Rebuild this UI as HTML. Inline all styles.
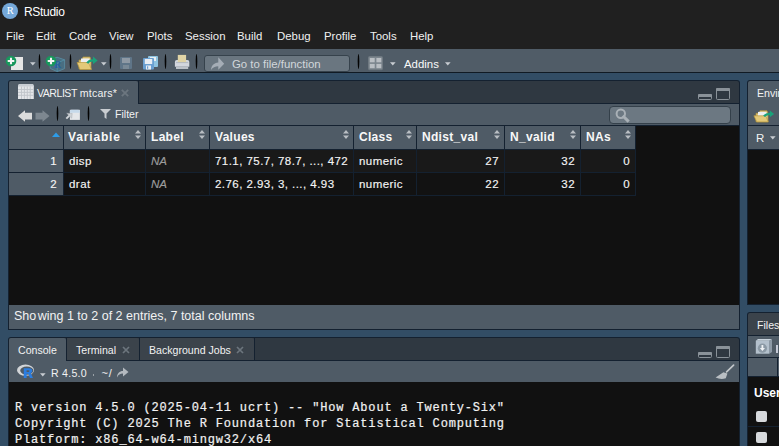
<!DOCTYPE html>
<html><head><meta charset="utf-8">
<style>
*{margin:0;padding:0;box-sizing:border-box}
html,body{width:779px;height:446px;overflow:hidden;background:#324d65;font-family:"Liberation Sans",sans-serif;color:#fff}
div,svg{position:absolute}
svg{overflow:visible}
.t{white-space:nowrap;line-height:14px}
.menu{top:29px;font-size:11.4px;color:#f0f0f0}
.sep{width:1.6px;background:#050505;border-radius:50%}
.bd{background:#142130}
.gray{background:#4f5b66}
.strip{background:#2f3841}
.itab{background:#3b434b}
.ui{font-size:10.6px;color:#f2f2f2}
.hdr{font-size:12px;letter-spacing:0.3px;font-weight:bold;color:#f8f8f8;top:130px}
.cell{font-size:11.5px;letter-spacing:0.45px;color:#f4f4f4;-webkit-text-stroke:0.15px #f4f4f4}
.mono{font-family:"Liberation Mono",monospace;font-size:12px;letter-spacing:0.83px;color:#f2f2f2;line-height:16px;white-space:pre;-webkit-text-stroke:0.2px #f2f2f2}
.arr{width:0;height:0;border-left:2.5px solid transparent;border-right:2.5px solid transparent;border-top:3.5px solid #c8ccd0}
</style></head><body>
<!-- title + menubar -->
<div style="left:0;top:0;width:779px;height:49px;background:#202020"></div>
<div style="left:2px;top:3px;width:16px;height:16px;border-radius:50%;background:#75a8d9"></div>
<div class="t" style="left:2.3px;top:4px;width:16px;text-align:center;font-family:'Liberation Serif',serif;font-size:10.5px;color:#fff">R</div>
<div class="t" style="left:24px;top:4.5px;font-size:12px;letter-spacing:-0.3px;color:#fff">RStudio</div>
<div class="t menu" style="left:6px">File</div>
<div class="t menu" style="left:36px">Edit</div>
<div class="t menu" style="left:69px">Code</div>
<div class="t menu" style="left:109px">View</div>
<div class="t menu" style="left:147px">Plots</div>
<div class="t menu" style="left:185px">Session</div>
<div class="t menu" style="left:237px">Build</div>
<div class="t menu" style="left:277px">Debug</div>
<div class="t menu" style="left:324px">Profile</div>
<div class="t menu" style="left:370px">Tools</div>
<div class="t menu" style="left:410px">Help</div>

<!-- main toolbar -->
<div style="left:0;top:49px;width:779px;height:23px;background:#505c67"></div>
<div style="left:0;top:72px;width:779px;height:1px;background:#101a24"></div>
<!-- new file icon -->
<div style="left:11px;top:57px;width:12px;height:13px;background:#e6e6e6"></div>

<svg style="left:5px;top:55px" width="12" height="12" viewBox="0 0 12 12"><circle cx="6" cy="6" r="5.3" fill="#18975c"/><path d="M6 2.7v6.6M2.7 6h6.6" stroke="#f4f4f4" stroke-width="2.1"/></svg>
<svg style="left:29.8px;top:62px" width="6" height="4" viewBox="0 0 6 4"><path d="M0 0.2h5.6L2.8 3.4z" fill="#c8cdd2"/></svg>
<svg style="left:38px;top:54px" width="3" height="15" viewBox="0 0 3 15"><ellipse cx="1.5" cy="7.5" rx="0.8" ry="7.5" fill="#030303"/></svg>
<!-- new project icon -->
<svg style="left:49px;top:56px" width="17" height="17" viewBox="0 0 17 17"><path d="M1.2 4.2L8 1.2l7.6 2.6v8.8L8.2 15.6 1.2 12.4z" fill="#457d99" opacity="0.55" stroke="#5fb2d0" stroke-width="0.9"/><path d="M1.2 4.2l7 2.8 7.4-3.2M8.2 7v8.6" stroke="#5fb2d0" stroke-width="0.7" fill="none" opacity="0.6"/><text x="5.2" y="11.8" font-family="Liberation Serif" font-weight="bold" font-size="9.5" fill="#2660a6">R</text></svg>
<svg style="left:45px;top:55px" width="12" height="12" viewBox="0 0 12 12"><circle cx="6" cy="6" r="5.3" fill="#18975c"/><path d="M6 2.7v6.6M2.7 6h6.6" stroke="#f4f4f4" stroke-width="2.1"/></svg>
<svg style="left:69px;top:54px" width="3" height="15" viewBox="0 0 3 15"><ellipse cx="1.5" cy="7.5" rx="0.8" ry="7.5" fill="#030303"/></svg>
<!-- open icon -->
<svg style="left:76px;top:56px" width="22" height="15" viewBox="0 0 22 15"><path d="M3 4h3l1-3h7l1 3v9H3z" fill="#dcc47c" stroke="#b3953e" stroke-width="0.7"/><rect x="5" y="2.5" width="8.5" height="7.5" fill="#eceff1"/><path d="M1 6.5h11.5l3 7H4z" fill="#e3c978" stroke="#b8983f" stroke-width="0.7"/><path d="M11.2 7.2Q13 4.2 17.5 4.3" stroke="#1aa27a" stroke-width="2.3" fill="none"/><path d="M17 0.6l4.6 3.9L17 8.3z" fill="#1aa27a"/></svg>
<svg style="left:100.8px;top:62px" width="6" height="4" viewBox="0 0 6 4"><path d="M0 0.2h5.6L2.8 3.4z" fill="#c8cdd2"/></svg>
<svg style="left:109px;top:54px" width="3" height="15" viewBox="0 0 3 15"><ellipse cx="1.5" cy="7.5" rx="0.8" ry="7.5" fill="#030303"/></svg>
<!-- save (disabled) -->
<svg style="left:120px;top:57px" width="13" height="13" viewBox="0 0 13 13"><rect x="0" y="0" width="12" height="12" rx="1" fill="#6c8aa4" opacity="0.55"/><rect x="2" y="1" width="8" height="5" fill="#9aa3ab" opacity="0.8"/><rect x="3" y="8" width="6" height="4" fill="#8a96a0" opacity="0.6"/></svg>
<!-- save all -->
<svg style="left:143px;top:56px" width="16" height="15" viewBox="0 0 16 15"><rect x="5" y="0" width="10" height="11" rx="1" fill="#8fc4e0"/><rect x="7" y="1" width="6" height="4" fill="#e8eef2"/><rect x="0" y="2" width="11" height="11.5" rx="1" fill="#6a9fd0"/><rect x="1.8" y="3" width="7.4" height="5" fill="#e9eef3"/><rect x="3" y="9.5" width="5" height="4" fill="#e9eef3"/><rect x="4" y="10.3" width="1.2" height="2.5" fill="#6a9fd0"/></svg>
<svg style="left:164px;top:54px" width="3" height="15" viewBox="0 0 3 15"><ellipse cx="1.5" cy="7.5" rx="0.8" ry="7.5" fill="#030303"/></svg>
<!-- print -->
<svg style="left:174px;top:54px" width="16" height="16" viewBox="0 0 16 16"><path d="M0.9 8Q0.9 6.1 2.8 6.1H13.4Q15.3 6.1 15.3 8V12.8H0.9z" fill="#d3d7de"/><rect x="3.8" y="0.9" width="8.3" height="7.3" fill="#e0d4a6"/><path d="M2 8.6H14.2" stroke="#a9b0b8" stroke-width="0.8"/><rect x="2" y="13" width="12.2" height="2" fill="#bcc2c9"/></svg>
<svg style="left:195px;top:54px" width="3" height="15" viewBox="0 0 3 15"><ellipse cx="1.5" cy="7.5" rx="0.8" ry="7.5" fill="#030303"/></svg>
<!-- go to file -->
<div style="left:204px;top:55px;width:146px;height:17px;background:#6a7680;border:1px solid #36424c;border-radius:3px"></div>
<svg style="left:210px;top:56px" width="15" height="15" viewBox="0 0 15 15"><path d="M1 14C1.3 9.5 3.8 6.8 8.3 6.4V1.2L14.2 7.8L8.3 13.8V10.2C5 10.2 2.8 11.4 1 14z" fill="#a5adb6"/></svg>
<div class="t" style="left:232px;top:57px;font-size:11.4px;color:#d2d7db">Go to file/function</div>
<svg style="left:357px;top:54px" width="3" height="15" viewBox="0 0 3 15"><ellipse cx="1.5" cy="7.5" rx="0.8" ry="7.5" fill="#030303"/></svg>
<!-- grid -->
<svg style="left:367.5px;top:55.5px" width="16" height="15" viewBox="0 0 16 15"><rect x="0.5" y="0.5" width="14" height="13.2" rx="1" fill="#7b858d" stroke="#6f7981" stroke-width="1"/><rect x="1.8" y="2" width="4.9" height="4.3" fill="#b9bec3"/><rect x="8.4" y="2" width="4.9" height="4.3" fill="#b9bec3"/><rect x="1.8" y="7.9" width="4.9" height="4.3" fill="#b9bec3"/><rect x="8.4" y="7.9" width="4.9" height="4.3" fill="#b9bec3"/></svg>
<svg style="left:389.8px;top:62px" width="6" height="4" viewBox="0 0 6 4"><path d="M0 0.2h5.6L2.8 3.4z" fill="#c8cdd2"/></svg>
<div class="t" style="left:404px;top:57px;font-size:11.4px;color:#fafafa">Addins</div>
<svg style="left:444.8px;top:62px" width="6" height="4" viewBox="0 0 6 4"><path d="M0 0.2h5.6L2.8 3.4z" fill="#c8cdd2"/></svg>

<!-- ================= LEFT TOP PANE ================= -->
<div class="bd" style="left:8px;top:80px;width:732px;height:250px;border-radius:3px 3px 0 0"></div>
<div class="strip" style="left:9px;top:81px;width:730px;height:22px;border-radius:2px 2px 0 0"></div>
<div class="gray" style="left:9px;top:81px;width:129px;height:23px;border-radius:2px 2px 0 0"></div>
<div class="bd" style="left:138px;top:81px;width:1px;height:22px"></div>
<!-- grid tab icon -->
<svg style="left:18px;top:84px" width="16" height="15" viewBox="0 0 16 15"><path d="M0 2.2Q0 0 2.2 0h11.4Q15.8 0 15.8 2.2V15H0z" fill="#e4e6e9"/><path d="M0 2.2Q0 0 2.2 0h11.4Q15.8 0 15.8 2.2V2.6H0z" fill="#c9ced4"/><path d="M3.5 2.6V15M6.4 2.6V15M9.3 2.6V15M12.2 2.6V15M0 5.5h15.8M0 8.4h15.8M0 11.3h15.8" stroke="#bfc4c9" stroke-width="0.9"/></svg>
<div class="t ui" style="left:37px;top:86px"><span style="letter-spacing:-0.5px">VARLIST</span> <span style="letter-spacing:0.2px">mtcars*</span></div>
<svg style="left:121px;top:89px" width="8" height="8" viewBox="0 0 8 8"><path d="M0.8 0.8l6.4 6.4M7.2 0.8l-6.4 6.4" stroke="#6c767f" stroke-width="1.8"/></svg>
<!-- min/max -->
<svg style="left:697px;top:87px" width="35" height="15" viewBox="0 0 35 15"><rect x="1.5" y="7.5" width="13" height="5" rx="1" fill="none" stroke="#8a9299" stroke-width="1"/><rect x="1" y="7" width="14" height="3" rx="1" fill="#8a9299"/><rect x="19.5" y="1.5" width="13" height="11" rx="1" fill="none" stroke="#8a9299" stroke-width="1"/><rect x="19" y="1" width="14" height="3" rx="1" fill="#8a9299"/></svg>
<!-- toolbar -->
<div class="gray" style="left:9px;top:104px;width:730px;height:21px"></div>
<svg style="left:18px;top:109.5px" width="33" height="13" viewBox="0 0 33 13"><path d="M0 6L7 0.2v2.5h7v6.7H7v2.4z" fill="#dcdcdc"/><path d="M31.5 6L24.5 0.2v2.5h-7v6.7h7v2.4z" fill="#7d8790"/></svg>
<svg style="left:56px;top:106px" width="3" height="15" viewBox="0 0 3 15"><ellipse cx="1.5" cy="7.5" rx="0.8" ry="7.5" fill="#030303"/></svg>
<svg style="left:65px;top:108px" width="17" height="13" viewBox="0 0 17 13"><rect x="4.9" y="1.8" width="10" height="10.1" fill="#e4e6e9"/><path d="M4.9 4.7V3.3Q4.9 1.8 6.4 1.8h7Q14.9 1.8 14.9 3.3V4.7z" fill="#c6d9ea"/><path d="M1.3 10.6L5 7" stroke="#d2d5d9" stroke-width="1.9"/><path d="M1.6 5.2L7.2 5.5L6.7 10.2z" fill="#cfd3d7" stroke="#9aa2a9" stroke-width="0.4"/></svg>
<svg style="left:87px;top:106px" width="3" height="15" viewBox="0 0 3 15"><ellipse cx="1.5" cy="7.5" rx="0.8" ry="7.5" fill="#030303"/></svg>
<svg style="left:100px;top:109px" width="11" height="10" viewBox="0 0 11 10"><path d="M0 0h11L6.5 4.5V10l-2-1.5V4.5z" fill="#c9cdd1"/></svg>
<div class="t ui" style="left:115px;top:107px">Filter</div>
<div style="left:609px;top:106px;width:122px;height:18px;background:#6c7882;border:1px solid #34404a;border-radius:4px"></div>
<svg style="left:615px;top:108px" width="15" height="15" viewBox="0 0 15 15"><circle cx="5.8" cy="5.8" r="4.2" fill="none" stroke="#a9b0b6" stroke-width="2"/><path d="M8.8 8.8l3.8 3.8" stroke="#a9b0b6" stroke-width="3" stroke-linecap="square"/></svg>
<!-- table -->
<div style="left:9px;top:126px;width:730px;height:179px;background:#111111"></div>
<div class="gray" style="left:9px;top:126px;width:626px;height:23px"></div>
<div style="left:63px;top:150px;width:572px;height:22px;background:#191919"></div>
<div style="left:63px;top:173px;width:572px;height:22px;background:#121212"></div>
<div class="gray" style="left:9px;top:150px;width:54px;height:45px"></div>
<div class="bd" style="left:9px;top:149px;width:626px;height:1px"></div>
<div class="bd" style="left:9px;top:172px;width:626px;height:1px"></div>
<div class="bd" style="left:9px;top:195px;width:626px;height:1px"></div>
<div class="bd" style="left:63px;top:126px;width:1px;height:69px"></div>
<div class="bd" style="left:145px;top:126px;width:1px;height:69px"></div>
<div class="bd" style="left:209px;top:126px;width:1px;height:69px"></div>
<div class="bd" style="left:353px;top:126px;width:1px;height:69px"></div>
<div class="bd" style="left:416px;top:126px;width:1px;height:69px"></div>
<div class="bd" style="left:504px;top:126px;width:1px;height:69px"></div>
<div class="bd" style="left:580px;top:126px;width:1px;height:69px"></div>
<div class="bd" style="left:635px;top:126px;width:1px;height:70px"></div>
<svg style="left:52px;top:132px" width="8" height="5" viewBox="0 0 8 5"><path d="M0 5L4 0.5 8 5z" fill="#2d9ce8"/></svg>
<div class="t hdr" style="left:68px;letter-spacing:0.85px">Variable</div>
<div class="t hdr" style="left:151px">Label</div>
<div class="t hdr" style="left:215px">Values</div>
<div class="t hdr" style="left:359px">Class</div>
<div class="t hdr" style="left:422px">Ndist_val</div>
<div class="t hdr" style="left:510px">N_valid</div>
<div class="t hdr" style="left:586px">NAs</div>
<!-- sort icons -->
<svg style="left:135px;top:130px" width="6" height="9" viewBox="0 0 6 9"><path d="M0 3.5L3 0 6 3.5zM0 5.5L3 9 6 5.5z" fill="#b9bec3"/></svg>
<svg style="left:199px;top:130px" width="6" height="9" viewBox="0 0 6 9"><path d="M0 3.5L3 0 6 3.5zM0 5.5L3 9 6 5.5z" fill="#b9bec3"/></svg>
<svg style="left:343px;top:130px" width="6" height="9" viewBox="0 0 6 9"><path d="M0 3.5L3 0 6 3.5zM0 5.5L3 9 6 5.5z" fill="#b9bec3"/></svg>
<svg style="left:406px;top:130px" width="6" height="9" viewBox="0 0 6 9"><path d="M0 3.5L3 0 6 3.5zM0 5.5L3 9 6 5.5z" fill="#b9bec3"/></svg>
<svg style="left:494px;top:130px" width="6" height="9" viewBox="0 0 6 9"><path d="M0 3.5L3 0 6 3.5zM0 5.5L3 9 6 5.5z" fill="#b9bec3"/></svg>
<svg style="left:570px;top:130px" width="6" height="9" viewBox="0 0 6 9"><path d="M0 3.5L3 0 6 3.5zM0 5.5L3 9 6 5.5z" fill="#b9bec3"/></svg>
<svg style="left:625px;top:130px" width="6" height="9" viewBox="0 0 6 9"><path d="M0 3.5L3 0 6 3.5zM0 5.5L3 9 6 5.5z" fill="#b9bec3"/></svg>
<!-- rows -->
<div class="t cell" style="left:9px;width:48px;text-align:right;top:154px">1</div>
<div class="t cell" style="left:69px;top:154px">disp</div>
<div class="t cell" style="left:151px;top:154px;font-style:italic;color:#9c9c9c;-webkit-text-stroke:0.15px #9c9c9c;font-size:11.5px;letter-spacing:0">NA</div>
<div class="t cell" style="left:215px;top:154px">71.1, 75.7, 78.7, ..., 472</div>
<div class="t cell" style="left:359px;top:154px">numeric</div>
<div class="t cell" style="left:417px;width:82px;text-align:right;top:154px">27</div>
<div class="t cell" style="left:505px;width:70px;text-align:right;top:154px">32</div>
<div class="t cell" style="left:581px;width:49px;text-align:right;top:154px">0</div>
<div class="t cell" style="left:9px;width:48px;text-align:right;top:177px">2</div>
<div class="t cell" style="left:69px;top:177px">drat</div>
<div class="t cell" style="left:151px;top:177px;font-style:italic;color:#9c9c9c;-webkit-text-stroke:0.15px #9c9c9c;font-size:11.5px;letter-spacing:0">NA</div>
<div class="t cell" style="left:215px;top:177px">2.76, 2.93, 3, ..., 4.93</div>
<div class="t cell" style="left:359px;top:177px">numeric</div>
<div class="t cell" style="left:417px;width:82px;text-align:right;top:177px">22</div>
<div class="t cell" style="left:505px;width:70px;text-align:right;top:177px">32</div>
<div class="t cell" style="left:581px;width:49px;text-align:right;top:177px">0</div>
<!-- footer -->
<div class="gray" style="left:9px;top:305px;width:730px;height:24px"></div>
<div class="t" style="left:14px;top:309px;font-size:12.5px;color:#f2f2f2">Sho<span style="margin-left:1.5px">wing</span> 1 to 2 of 2 entries, 7 total columns</div>

<!-- ================= LEFT BOTTOM PANE ================= -->
<div class="bd" style="left:8px;top:337px;width:732px;height:120px;border-radius:3px 3px 0 0"></div>
<div class="strip" style="left:9px;top:338px;width:730px;height:22px;border-radius:2px 2px 0 0"></div>
<div class="gray" style="left:9px;top:338px;width:57px;height:23px;border-radius:2px 2px 0 0"></div>
<div class="itab" style="left:67px;top:338px;width:72px;height:22px;border-radius:0 2px 0 0"></div>
<div class="itab" style="left:140px;top:338px;width:114px;height:22px;border-radius:0 2px 0 0"></div>
<div class="bd" style="left:66px;top:338px;width:1px;height:22px"></div>
<div class="bd" style="left:139px;top:338px;width:1px;height:22px"></div>
<div class="bd" style="left:254px;top:338px;width:1px;height:22px"></div>
<div class="t ui" style="left:18px;top:343px">Console</div>
<div class="t ui" style="left:76px;top:343px">Terminal</div>
<svg style="left:122px;top:346px" width="8" height="8" viewBox="0 0 8 8"><path d="M1 1l6 6M7 1l-6 6" stroke="#6c757d" stroke-width="1.7"/></svg>
<div class="t ui" style="left:149px;top:343px">Background Jobs</div>
<svg style="left:236px;top:346px" width="8" height="8" viewBox="0 0 8 8"><path d="M1 1l6 6M7 1l-6 6" stroke="#6c757d" stroke-width="1.7"/></svg>
<svg style="left:697px;top:345px" width="35" height="15" viewBox="0 0 35 15"><rect x="1.5" y="7.5" width="13" height="5" rx="1" fill="none" stroke="#8a9299" stroke-width="1"/><rect x="1" y="7" width="14" height="3" rx="1" fill="#8a9299"/><rect x="19.5" y="1.5" width="13" height="11" rx="1" fill="none" stroke="#8a9299" stroke-width="1"/><rect x="19" y="1" width="14" height="3" rx="1" fill="#8a9299"/></svg>
<div class="gray" style="left:9px;top:361px;width:730px;height:21px"></div>
<svg style="left:17px;top:364px" width="18" height="15" viewBox="0 0 18 15"><path fill-rule="evenodd" d="M0 6.2a8.5 5.6 0 1 0 17 0a8.5 5.6 0 1 0 -17 0zM3.2 6.6a6.6 4.2 0 1 0 13.2 0a6.6 4.2 0 1 0 -13.2 0z" fill="#d2d5d8"/><path d="M6.8 4.2h5.2c2.2 0 3.3 1 3.3 2.6 0 1.2-0.7 2-1.7 2.3L16 14h-3l-1.8-4.3H9.6V14H6.8z M9.6 6.3v1.6h1.9c0.7 0 1-0.3 1-0.8s-0.3-0.8-1-0.8z" fill="#2b7de0"/></svg>
<svg style="left:39.8px;top:373px" width="6" height="4" viewBox="0 0 6 4"><path d="M0 0.2h5.6L2.8 3.4z" fill="#c8cdd2"/></svg>
<div class="t ui" style="left:51px;top:366px;letter-spacing:0.25px">R 4.5.0</div>
<div style="left:92.5px;top:374px;width:1.6px;height:1.6px;background:#9aa1a7"></div>
<div class="t ui" style="left:101.5px;top:366px;letter-spacing:0.8px;font-size:11px">~/</div>
<svg style="left:117px;top:367px" width="12" height="11" viewBox="0 0 12 11"><path d="M0 10.5c0-4 2.5-6.5 6-6.5V0.5l5.5 4.5L6 9.5V6.5c-3 0-4.5 1-6 4z" fill="#b3b9bf"/></svg>
<svg style="left:715px;top:364px" width="20" height="16" viewBox="0 0 20 16"><path d="M18.6 1.2L11.6 7.8" stroke="#c2c6ca" stroke-width="1.7" stroke-linecap="round"/><path d="M8.4 8.2L12.4 9.4L10.8 14.2Q6 15.9 0.6 13.6z" fill="#b9bec3"/></svg>
<div style="left:9px;top:382px;width:730px;height:64px;background:#111111"></div>
<div class="mono" style="left:15px;top:400px">R version 4.5.0 (2025-04-11 ucrt) -- "How About a Twenty-Six"
Copyright (C) 2025 The R Foundation for Statistical Computing
Platform: x86_64-w64-mingw32/x64</div>

<!-- ================= RIGHT TOP PANE ================= -->
<div class="bd" style="left:747px;top:80px;width:40px;height:225px;border-radius:3px 0 0 0"></div>
<div class="gray" style="left:748px;top:81px;width:40px;height:44px;border-radius:2px 0 0 0"></div>
<div class="t ui" style="left:757px;top:86px">Environment</div>
<svg style="left:753px;top:108.5px" width="22" height="15" viewBox="0 0 22 15"><path d="M3 4.3h3l1-2.6h7l1 2.6v8.5H3z" fill="#dcc47c" stroke="#b3953e" stroke-width="0.7"/><rect x="5" y="2.9" width="8.5" height="7" fill="#eceff1"/><path d="M0.9 6.8h11.8l2.6 6.1H3.8z" fill="#e3c978" stroke="#b8983f" stroke-width="0.7"/><path d="M11 7.3Q13 4.8 17.3 4.8" stroke="#1aa27a" stroke-width="2.2" fill="none"/><path d="M16.8 1.6l4.3 3.3-4.3 3.4z" fill="#1aa27a"/></svg>
<div class="gray" style="left:748px;top:126px;width:40px;height:23px"></div>
<div class="t ui" style="left:756px;top:130.5px;font-size:11.5px">R</div>
<svg style="left:769.8px;top:136px" width="6" height="4" viewBox="0 0 6 4"><path d="M0 0.2h5.6L2.8 3.4z" fill="#c8cdd2"/></svg>
<div style="left:748px;top:150px;width:40px;height:154px;background:#111111"></div>

<!-- ================= RIGHT BOTTOM PANE ================= -->
<div class="bd" style="left:747px;top:312px;width:40px;height:140px;border-radius:3px 0 0 0"></div>
<div class="itab" style="left:748px;top:313px;width:40px;height:22px;border-radius:2px 0 0 0"></div>
<div class="t ui" style="left:757px;top:318px">Files</div>
<div class="gray" style="left:748px;top:336px;width:40px;height:21px"></div>
<svg style="left:755px;top:338px" width="18" height="17" viewBox="0 0 18 17"><path d="M0.8 2.7L3 1h14l-2.7 1.7z" fill="#c9d3dc"/><path d="M14.3 2.7L17 1v13l-2.7 1.7z" fill="#8d9aa6"/><rect x="0.8" y="2.7" width="13.5" height="13" fill="#b3c0cc"/><circle cx="7.4" cy="10.2" r="4.6" fill="#8b99a5"/><path d="M6.5 7h1.8v3h1.7L7.4 13 4.8 10h1.7z" fill="#eef1f4"/></svg>
<div style="left:776px;top:345px;width:2px;height:8px;background:#c4c9d6"></div>
<div class="gray" style="left:748px;top:358px;width:29px;height:18px"></div>
<div class="gray" style="left:778px;top:358px;width:10px;height:18px"></div>
<div style="left:748px;top:377px;width:40px;height:69px;background:#111111"></div>
<div class="t" style="left:754px;top:386px;font-size:12px;font-weight:bold;color:#fff">User</div>
<div style="left:756px;top:411px;width:11px;height:11px;background:#d6d9dc;border-radius:2px"></div>
<div class="bd" style="left:748px;top:426px;width:40px;height:1px"></div>
<div style="left:756px;top:432px;width:11px;height:11px;background:#d6d9dc;border-radius:2px"></div>
</body></html>
